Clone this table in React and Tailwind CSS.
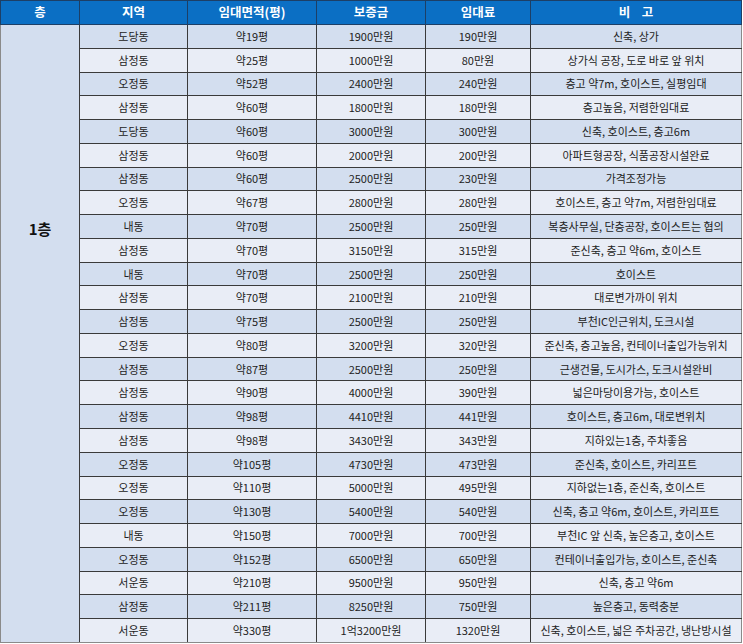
import React from 'react';

const rows = [
  ['도당동', '약19평', '1900만원', '190만원', '신축, 상가'],
  ['삼정동', '약25평', '1000만원', '80만원', '상가식 공장, 도로 바로 앞 위치'],
  ['오정동', '약52평', '2400만원', '240만원', '층고 약7m, 호이스트, 실평임대'],
  ['삼정동', '약60평', '1800만원', '180만원', '층고높음, 저렴한임대료'],
  ['도당동', '약60평', '3000만원', '300만원', '신축, 호이스트, 층고6m'],
  ['삼정동', '약60평', '2000만원', '200만원', '아파트형공장, 식품공장시설완료'],
  ['삼정동', '약60평', '2500만원', '230만원', '가격조정가능'],
  ['오정동', '약67평', '2800만원', '280만원', '호이스트, 층고 약7m, 저렴한임대료'],
  ['내동', '약70평', '2500만원', '250만원', '복층사무실, 단층공장, 호이스트는 협의'],
  ['삼정동', '약70평', '3150만원', '315만원', '준신축, 층고 약6m, 호이스트'],
  ['내동', '약70평', '2500만원', '250만원', '호이스트'],
  ['삼정동', '약70평', '2100만원', '210만원', '대로변가까이 위치'],
  ['삼정동', '약75평', '2500만원', '250만원', '부천IC인근위치, 도크시설'],
  ['오정동', '약80평', '3200만원', '320만원', '준신축, 층고높음, 컨테이너출입가능위치'],
  ['삼정동', '약87평', '2500만원', '250만원', '근생건물, 도시가스, 도크시설완비'],
  ['삼정동', '약90평', '4000만원', '390만원', '넓은마당이용가능, 호이스트'],
  ['삼정동', '약98평', '4410만원', '441만원', '호이스트, 층고6m, 대로변위치'],
  ['삼정동', '약98평', '3430만원', '343만원', '지하있는1층, 주차좋음'],
  ['오정동', '약105평', '4730만원', '473만원', '준신축, 호이스트, 카리프트'],
  ['오정동', '약110평', '5000만원', '495만원', '지하없는1층, 준신축, 호이스트'],
  ['오정동', '약130평', '5400만원', '540만원', '신축, 층고 약6m, 호이스트, 카리프트'],
  ['내동', '약150평', '7000만원', '700만원', '부천IC 앞 신축, 높은층고, 호이스트'],
  ['오정동', '약152평', '6500만원', '650만원', '컨테이너출입가능, 호이스트, 준신축'],
  ['서운동', '약210평', '9500만원', '950만원', '신축, 층고 약6m'],
  ['삼정동', '약211평', '8250만원', '750만원', '높은층고, 동력충분'],
  ['서운동', '약330평', '1억3200만원', '1320만원', '신축, 호이스트, 넓은 주차공간, 냉난방시설'],
];

const headers = ['층', '지역', '임대면적(평)', '보증금', '임대료', '비    고'];

export default function App() {
  return (
    <div className="w-[743px] h-[644px] bg-white overflow-hidden" style={{ fontFamily: '"Malgun Gothic", "Noto Sans CJK KR", sans-serif' }}>
      <table className="table-fixed border-collapse w-[742px] border border-[#8a8a8a] text-[11px] text-[#222] leading-none">
        <colgroup>
          <col className="w-[79px]" />
          <col className="w-[108px]" />
          <col className="w-[129px]" />
          <col className="w-[109px]" />
          <col className="w-[105px]" />
          <col />
        </colgroup>
        <thead>
          <tr className="h-[24px] bg-[#0b6fc4]">
            {headers.map((h, i) => (
              <th key={i} className="border border-[#1d3f66] text-white font-bold text-[12.5px] text-center whitespace-pre">
                {h}
              </th>
            ))}
          </tr>
        </thead>
        <tbody>
          {rows.map((r, i) => {
            const bg = i % 2 === 0 ? 'bg-[#d3deef]' : 'bg-[#e9edf6]';
            return (
              <tr key={i} className={`h-[23.77px] ${bg}`}>
                {i === 0 && (
                  <td rowSpan={rows.length} className="bg-[#d3deef] border border-[#3a3a3a] border-l-[#8a8a8a] border-b-[#8a8a8a] text-center font-bold text-[15px] text-[#111] align-top pt-[196px]">
                    1층
                  </td>
                )}
                {r.map((c, j) => (
                  <td key={j} className={`border border-[#3a3a3a] text-center whitespace-nowrap ${j === 4 ? 'border-r-[#8a8a8a]' : ''} ${i === rows.length - 1 ? 'border-b-[#8a8a8a]' : ''}`}>
                    {c}
                  </td>
                ))}
              </tr>
            );
          })}
        </tbody>
      </table>
    </div>
  );
}
